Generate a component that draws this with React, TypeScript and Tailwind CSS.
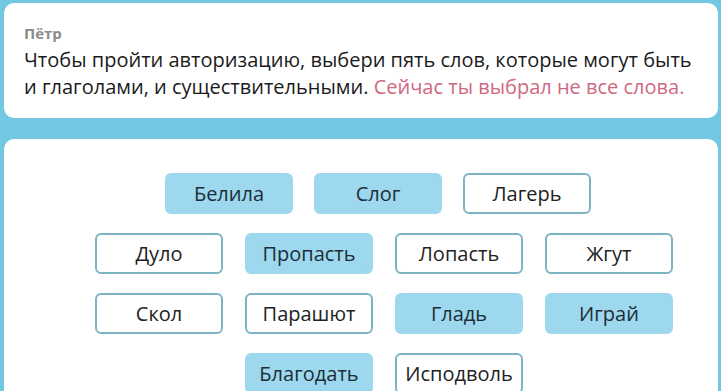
import React from 'react';

interface Word {
  text: string;
  selected: boolean;
}

const rows: { pad: string; gap: string; words: Word[] }[] = [
  {
    pad: 'pl-[70px]',
    gap: 'gap-x-[21px]',
    words: [
      { text: 'Белила', selected: true },
      { text: 'Слог', selected: true },
      { text: 'Лагерь', selected: false },
    ],
  },
  {
    pad: 'pl-0',
    gap: 'gap-x-[22px]',
    words: [
      { text: 'Дуло', selected: false },
      { text: 'Пропасть', selected: true },
      { text: 'Лопасть', selected: false },
      { text: 'Жгут', selected: false },
    ],
  },
  {
    pad: 'pl-0',
    gap: 'gap-x-[22px]',
    words: [
      { text: 'Скол', selected: false },
      { text: 'Парашют', selected: false },
      { text: 'Гладь', selected: true },
      { text: 'Играй', selected: true },
    ],
  },
  {
    pad: 'pl-[150px]',
    gap: 'gap-x-[22px]',
    words: [
      { text: 'Благодать', selected: true },
      { text: 'Исподволь', selected: false },
    ],
  },
];

function WordButton({ word }: { word: Word }) {
  return (
    <button
      className={
        word.selected
          ? 'flex h-[41px] w-[128px] items-center justify-center rounded-md border-2 border-[#9dd8ee] bg-[#9dd8ee] text-[20px] text-[#1c2e38]'
          : 'flex h-[41px] w-[128px] items-center justify-center rounded-md border-2 border-[#7db4c4] bg-white text-[20px] text-[#222]'
      }
    >
      {word.text}
    </button>
  );
}

export default function App() {
  return (
    <div
      className="flex h-[391px] w-[721px] flex-col overflow-hidden bg-[#72c8e0] pl-[4px] pr-[3px] pt-[3px]"
      style={{ fontFamily: '"Open Sans", "Noto Sans", sans-serif' }}
    >
      <div className="h-[115px] shrink-0 rounded-[10px] bg-white px-[20px] pt-[20px]">
        <div className="text-[15px] font-bold leading-[21px] text-[#8b8b8b]">Пётр</div>
        <p className="mt-[2px] whitespace-nowrap text-[20px] leading-[27px] text-[#1b1b1b]">
          Чтобы пройти авторизацию, выбери пять слов, которые могут быть
          <br />
          и глаголами, и существительными.{' '}
          <span className="text-[#d0687f]">Сейчас ты выбрал не все слова.</span>
        </p>
      </div>
      <div className="mt-[21px] flex-1 rounded-t-[10px] bg-white pl-[91px] pt-[34px]">
        <div className="flex flex-col gap-y-[19px]">
          {rows.map((row, i) => (
            <div key={i} className={`flex ${row.pad} ${row.gap}`}>
              {row.words.map((w) => (
                <WordButton key={w.text} word={w} />
              ))}
            </div>
          ))}
        </div>
      </div>
    </div>
  );
}
